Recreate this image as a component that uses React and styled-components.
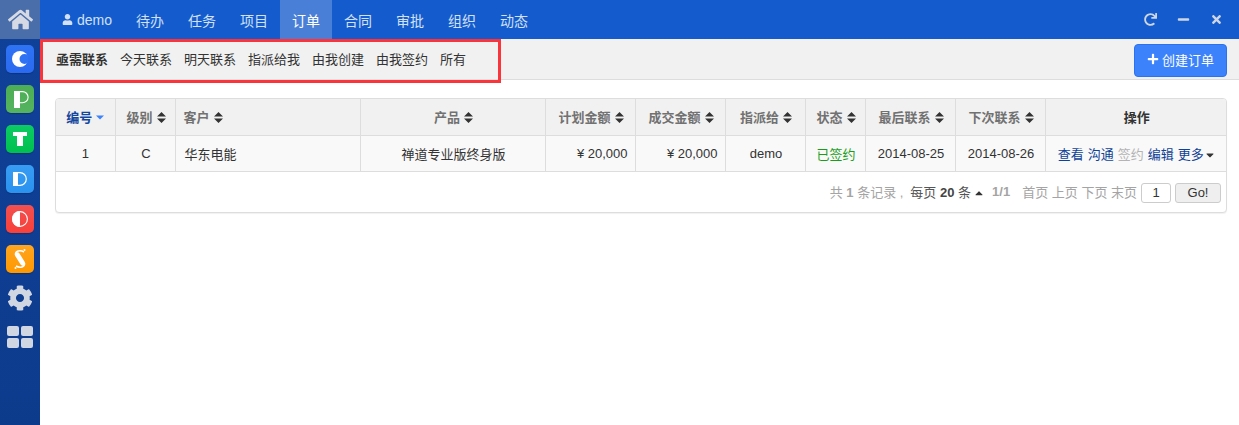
import React from "react";
import styled, { createGlobalStyle, css } from "styled-components";
import {
  FaHome,
  FaUser,
  FaRedo,
  FaMinus,
  FaTimes,
  FaPlus,
  FaCog,
  FaCaretDown,
  FaCaretUp,
} from "react-icons/fa";

const GlobalStyle = createGlobalStyle`
  html, body {
    margin: 0;
    padding: 0;
    height: 100%;
    background: #fff;
  }
  #root {
    height: 100%;
  }
  body {
    font-family: "Liberation Sans", "Noto Sans CJK SC", sans-serif;
    font-size: 13px;
    color: #333;
  }
  * {
    box-sizing: border-box;
  }
`;

const Page = styled.div`
  display: flex;
  height: 425px;
  width: 1239px;
  overflow: hidden;
`;

const Sidebar = styled.aside`
  width: 40px;
  flex: none;
  display: flex;
  flex-direction: column;
  align-items: center;
  background: linear-gradient(#10419a, #0d3b8c);
`;

const HomeButton = styled.div`
  width: 40px;
  height: 39px;
  display: flex;
  align-items: center;
  justify-content: center;
  background: #4a6ea9;
  color: #d5dae4;
  font-size: 25px;
  margin-bottom: 6px;
`;

const Tile = styled.div`
  width: 28px;
  height: 28px;
  border-radius: 5px;
  margin-bottom: 12px;
  display: flex;
  align-items: center;
  justify-content: center;
  background: ${(p) => p.$bg};
  box-shadow: 0 1px 1px rgba(0, 0, 0, 0.2);
  svg {
    display: block;
  }
`;

const SideIcon = styled.div`
  height: 26px;
  display: flex;
  align-items: center;
  justify-content: center;
  color: #d0d6e2;
  font-size: 26px;
  margin-bottom: ${(p) => p.$gap}px;
`;

const Main = styled.main`
  flex: 1;
  min-width: 0;
  display: flex;
  flex-direction: column;
`;

const TopBar = styled.header`
  height: 39px;
  background: #145ccd;
  display: flex;
  align-items: stretch;
  justify-content: space-between;
  padding-left: 10px;
`;

const Nav = styled.nav`
  display: flex;
  align-items: stretch;
`;

const NavItem = styled.div`
  display: flex;
  align-items: center;
  gap: 4px;
  padding: 0 12px;
  color: #d3e0f5;
  font-size: 14px;
  ${(p) =>
    p.$active &&
    css`
      background: #4a7fd8;
      color: #fff;
    `}
`;

const WindowTools = styled.div`
  display: flex;
  align-items: center;
  gap: 20px;
  padding-right: 16px;
  color: #cfd6e4;
  font-size: 13px;
`;

const SubBar = styled.div`
  position: relative;
  height: 41px;
  background: #f1f1f1;
  border-bottom: 1px solid #ddd;
  display: flex;
  align-items: center;
  justify-content: space-between;
  padding: 0 12px 0 10px;
`;

const SubNav = styled.div`
  display: flex;
  align-items: center;
  margin-top: -1px;
`;

const SubItem = styled.span`
  padding: 0 6px;
  color: #333;
  font-weight: ${(p) => (p.$active ? 700 : 400)};
`;

const Highlight = styled.div`
  position: absolute;
  left: 0;
  top: 0;
  width: 461px;
  height: 44px;
  border: 3px solid #f9343a;
  pointer-events: none;
`;

const CreateButton = styled.button`
  height: 33px;
  width: 93px;
  margin-top: 2px;
  border: 1px solid #2a72f0;
  border-radius: 4px;
  background: #3b82fb;
  color: #fff;
  font: inherit;
  display: flex;
  align-items: center;
  justify-content: center;
  gap: 3px;
  padding: 0 0 2px;
  svg {
    font-size: 12px;
  }
`;

const Content = styled.div`
  padding: 18px 12px 0 15px;
`;

const Panel = styled.section`
  border: 1px solid #ddd;
  border-radius: 4px;
  box-shadow: 0 1px 1px rgba(0, 0, 0, 0.06);
  overflow: hidden;
  background: #fff;
`;

const Table = styled.table`
  width: 100%;
  table-layout: fixed;
  border-collapse: collapse;
`;

const Head = styled.th`
  width: ${(p) => p.$w}px;
  height: 36px;
  padding: 0 7px 0 ${(p) => (p.$align === "left" ? 8 : 9)}px;
  background: #f1f1f1;
  color: ${(p) => (p.$sorted ? "#13479e" : p.$plain ? "#333" : "#717171")};
  font-weight: 700;
  font-size: 13px;
  text-align: ${(p) => p.$align || "center"};
  white-space: nowrap;
  border-right: 1px solid #ddd;
  border-bottom: 1px solid #ddd;
  &:first-child {
    padding: 0 8px;
  }
  &:last-child {
    border-right: 0;
  }
`;

const SortIcon = styled.span`
  display: inline-block;
  margin-left: 4px;
  vertical-align: -1px;
  line-height: 0;
  svg {
    display: block;
  }
`;

const Cell = styled.td`
  height: 36px;
  padding: 0 7px 0 9px;
  background: #f9f9f9;
  color: ${(p) => p.$color || "#333"};
  text-align: ${(p) => p.$align || "center"};
  white-space: nowrap;
  border-right: 1px solid #ddd;
  border-bottom: 1px solid #ddd;
  &:first-child {
    padding: 0 8px;
  }
  &:last-child {
    border-right: 0;
  }
`;

const Action = styled.span`
  color: ${(p) => (p.$off ? "#b4b4b4" : "#0f4296")};
  margin-right: 4px;
  &:last-child {
    margin-right: 0;
  }
  svg {
    font-size: 12px;
    color: #333;
    vertical-align: -2px;
  }
`;

const Pager = styled.div`
  height: 40px;
  display: flex;
  align-items: center;
  justify-content: flex-end;
  padding-right: 5px;
  color: #a4a4a4;
  white-space: nowrap;
`;

const PagerSize = styled.span`
  color: #555;
  margin-left: 7px;
  margin-right: 7px;
  b {
    color: #444;
  }
  svg {
    font-size: 12px;
    color: #333;
    vertical-align: -2px;
    margin-left: 2px;
  }
`;

const PagerText = styled.span`
  margin-right: ${(p) => p.$gap || 0}px;
`;

const PageInput = styled.div`
  width: 30px;
  height: 20px;
  margin: 2px 4px 0;
  border: 1px solid #ccc;
  border-radius: 3px;
  background: #fff;
  color: #333;
  font-size: 13px;
  line-height: 18px;
  text-align: center;
`;

const GoButton = styled.div`
  width: 46px;
  height: 20px;
  margin-top: 2px;
  border: 1px solid #ccc;
  border-radius: 3px;
  background: #efefef;
  color: #333;
  font-size: 13px;
  line-height: 18px;
  text-align: center;
`;

const heads = [
  { label: "编号", w: 59, sorted: true },
  { label: "级别", w: 60 },
  { label: "客户", w: 185, align: "left" },
  { label: "产品", w: 185 },
  { label: "计划金额", w: 90 },
  { label: "成交金额", w: 90 },
  { label: "指派给", w: 80 },
  { label: "状态", w: 60 },
  { label: "最后联系", w: 90 },
  { label: "下次联系", w: 90 },
];

const nav = ["待办", "任务", "项目", "订单", "合同", "审批", "组织", "动态"];
const sub = ["今天联系", "明天联系", "指派给我", "由我创建", "由我签约", "所有"];

const SortBoth = () => (
  <svg width="9" height="11" viewBox="0 0 9 11">
    <path d="M4.5 0L9 4.6H0z M0 6.4h9L4.5 11z" fill="#333" />
  </svg>
);

const SortDown = () => (
  <svg width="8" height="11" viewBox="0 0 8 11">
    <path d="M0 3.5h8L4 7.5z" fill="#3b82fb" />
  </svg>
);

const CrescentLogo = () => (
  <svg width="16" height="16" viewBox="0 0 16 16">
    <circle cx="8" cy="8" r="8" fill="#fff" />
    <circle cx="12.5" cy="8" r="5" fill="#2f73f5" />
  </svg>
);

const ParkLogo = () => (
  <svg width="20" height="20" viewBox="0 0 20 20">
    <rect x="4" y="2" width="6" height="17" fill="#fff" />
    <path d="M9 2.6h3.5a5.6 5.6 0 0 1 0 11.2H9" fill="none" stroke="#fff" strokeWidth="1.1" />
  </svg>
);

const TeeLogo = () => (
  <svg width="20" height="20" viewBox="0 0 20 20">
    <path d="M3 3h14v4h-4v10H7V7H3z" fill="#fff" />
  </svg>
);

const DeeLogo = () => (
  <svg width="20" height="20" viewBox="0 0 20 20">
    <rect x="3" y="3" width="5" height="14" fill="#fff" />
    <path d="M8 3.7h2a6.3 6.3 0 0 1 0 12.6H8" fill="none" stroke="#fff" strokeWidth="1.2" />
  </svg>
);

const HalfLogo = () => (
  <svg width="16" height="16" viewBox="0 0 16 16">
    <circle cx="8" cy="8" r="7.4" fill="none" stroke="#fff" strokeWidth="1.1" />
    <path d="M8 0a8 8 0 0 0 0 16z" fill="#fff" />
  </svg>
);

const SwirlLogo = () => (
  <svg width="20" height="22" viewBox="0 0 20 22">
    <path d="M7.5 7L12.5 15" stroke="#fff" strokeWidth="5" strokeLinecap="round" />
    <path d="M5.5 7C5 3 10 1.5 14 4" fill="none" stroke="#fff" strokeWidth="1.5" />
    <path d="M14.5 15C15 19 10 20.5 6 18" fill="none" stroke="#fff" strokeWidth="1.5" />
    <circle cx="14.5" cy="2" r="1" fill="#fff" />
    <circle cx="5.5" cy="20" r="1" fill="#fff" />
  </svg>
);

const GridLogo = () => (
  <svg width="28" height="24" viewBox="0 0 28 24">
    <rect x="1" y="1" width="12" height="10" rx="2" fill="#d0d6e2" />
    <rect x="15" y="1" width="12" height="10" rx="2" fill="#d0d6e2" />
    <rect x="1" y="13" width="12" height="10" rx="2" fill="#d0d6e2" />
    <rect x="15" y="13" width="12" height="10" rx="2" fill="#d0d6e2" />
  </svg>
);

export default function App() {
  return (
    <Page>
      <GlobalStyle />
      <Sidebar>
        <HomeButton>
          <FaHome />
        </HomeButton>
        <Tile $bg="linear-gradient(#2f73f5, #2a6af0)">
          <CrescentLogo />
        </Tile>
        <Tile $bg="linear-gradient(#4cae55, #55b35f)">
          <ParkLogo />
        </Tile>
        <Tile $bg="linear-gradient(#0ccb63, #00c050)">
          <TeeLogo />
        </Tile>
        <Tile $bg="linear-gradient(#379cf2, #2a92f0)">
          <DeeLogo />
        </Tile>
        <Tile $bg="linear-gradient(#f25050, #f8403a)">
          <HalfLogo />
        </Tile>
        <Tile $bg="linear-gradient(#ffa51f, #ff9800)">
          <SwirlLogo />
        </Tile>
        <SideIcon $gap={13}>
          <FaCog />
        </SideIcon>
        <SideIcon $gap={0}>
          <GridLogo />
        </SideIcon>
      </Sidebar>
      <Main>
        <TopBar>
          <Nav>
            <NavItem>
              <FaUser size={11} />
              demo
            </NavItem>
            {nav.map((item) => (
              <NavItem key={item} $active={item === "订单"}>
                {item}
              </NavItem>
            ))}
          </Nav>
          <WindowTools>
            <FaRedo />
            <FaMinus />
            <FaTimes />
          </WindowTools>
        </TopBar>
        <SubBar>
          <SubNav>
            <SubItem $active>亟需联系</SubItem>
            {sub.map((item) => (
              <SubItem key={item}>{item}</SubItem>
            ))}
          </SubNav>
          <CreateButton>
            <FaPlus />
            创建订单
          </CreateButton>
          <Highlight />
        </SubBar>
        <Content>
          <Panel>
            <Table>
              <thead>
                <tr>
                  {heads.map((h) => (
                    <Head key={h.label} $w={h.w} $align={h.align} $sorted={h.sorted}>
                      {h.label}
                      <SortIcon>{h.sorted ? <SortDown /> : <SortBoth />}</SortIcon>
                    </Head>
                  ))}
                  <Head $plain>操作</Head>
                </tr>
              </thead>
              <tbody>
                <tr>
                  <Cell>1</Cell>
                  <Cell>C</Cell>
                  <Cell $align="left">华东电能</Cell>
                  <Cell>禅道专业版终身版</Cell>
                  <Cell $align="right">¥ 20,000</Cell>
                  <Cell $align="right">¥ 20,000</Cell>
                  <Cell>demo</Cell>
                  <Cell $color="#1a9e1a">已签约</Cell>
                  <Cell>2014-08-25</Cell>
                  <Cell>2014-08-26</Cell>
                  <Cell>
                    <Action>查看</Action>
                    <Action>沟通</Action>
                    <Action $off>签约</Action>
                    <Action>编辑</Action>
                    <Action>
                      更多
                      <FaCaretDown />
                    </Action>
                  </Cell>
                </tr>
              </tbody>
            </Table>
            <Pager>
              <span>
                共 <b>1</b> 条记录 ,
              </span>
              <PagerSize>
                每页 <b>20</b> 条<FaCaretUp />
              </PagerSize>
              <PagerText $gap={12}>
                <b>1/1</b>
              </PagerText>
              <PagerText>首页 上页 下页 末页</PagerText>
              <PageInput>1</PageInput>
              <GoButton>Go!</GoButton>
            </Pager>
          </Panel>
        </Content>
      </Main>
    </Page>
  );
}
